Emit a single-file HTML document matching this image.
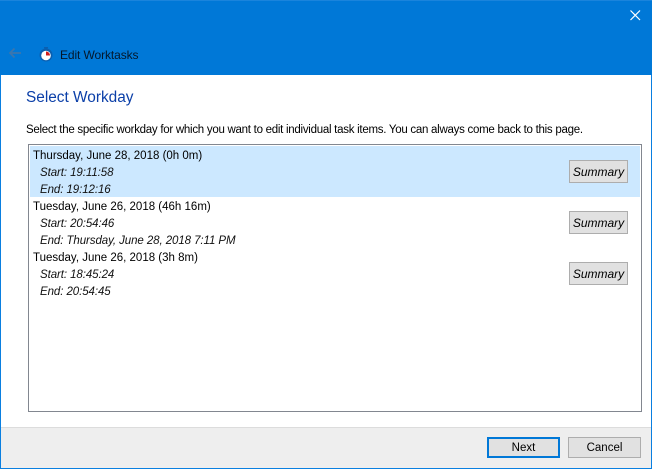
<!DOCTYPE html>
<html><head><meta charset="utf-8"><style>
html,body{margin:0;padding:0;width:652px;height:469px;overflow:hidden;background:#fff}
body{position:relative;font-family:"Liberation Sans",sans-serif;font-size:11.5px;color:#000}
div{position:absolute;box-sizing:border-box}
.t{white-space:nowrap;line-height:16px;height:16px}
.i{font-style:italic;color:#111;letter-spacing:-.08px}
.s{left:569px;width:59px;height:23px;background:#e1e1e1;border:1px solid #adadad;font-size:12px;font-style:italic;text-align:center;line-height:22px;white-space:nowrap}
.b{top:437px;width:73px;height:21px;background:#e1e1e1;border:1px solid #adadad;text-align:center;line-height:21px}
</style></head><body>
<div style="left:0;top:0;width:652px;height:469px;border:1px solid #0a7fe0;border-top:1px solid #1a84dc"></div>
<div style="left:0;top:0;width:652px;height:75px;background:#0078d7;border-top:1px solid #1a84dc"></div>
<svg style="position:absolute;left:0;top:0" width="652" height="75">
<path d="M630.5 10.5l9.5 9.5M640 10.5l-9.5 9.5" stroke="#fff" stroke-width="1.2" fill="none"/>
<path d="M21 53H10M14.5 48.5L10 53l4.500 4.500" stroke="#3b76ad" stroke-width="1.700" fill="none"/>
<circle cx="46" cy="55" r="6.500" fill="#0a5fb0"/>
<circle cx="46" cy="55.500" r="4.800" fill="#fff"/>
<path d="M46 55.500V51.500A4 4 0 0 1 50 55.500Z" fill="#d01c1c"/>
<rect x="44" y="47" width="4" height="1.500" fill="#0a5fb0"/>
</svg>
<div class="t" style="left:60px;top:47px;font-size:12px;color:#04182c;letter-spacing:-.1px">Edit Worktasks</div>
<div style="left:26px;top:88px;font-size:15.400px;line-height:20px;color:#0b3fa8;white-space:nowrap">Select Workday</div>
<div class="t" style="left:26px;top:122px;letter-spacing:-.27px">Select the specific workday for which you want to edit individual task items. You can always come back to this page.</div>
<div style="left:28px;top:144px;width:614px;height:268px;border:1.500px solid #828790"></div>
<div style="left:30px;top:146px;width:610px;height:51px;background:#cce8ff"></div>
<div class="t" style="left:33px;top:148px">Thursday, June 28, 2018 (0h 0m)</div>
<div class="t i" style="left:40px;top:165px">Start: 19:11:58</div>
<div class="t i" style="left:40px;top:182px">End: 19:12:16</div>
<div class="t" style="left:33px;top:199px">Tuesday, June 26, 2018 (46h 16m)</div>
<div class="t i" style="left:40px;top:216px">Start: 20:54:46</div>
<div class="t i" style="left:40px;top:233px">End: Thursday, June 28, 2018 7:11 PM</div>
<div class="t" style="left:33px;top:250px">Tuesday, June 26, 2018 (3h 8m)</div>
<div class="t i" style="left:40px;top:267px">Start: 18:45:24</div>
<div class="t i" style="left:40px;top:284px">End: 20:54:45</div>
<div class="s" style="top:160px">Summary</div>
<div class="s" style="top:211px">Summary</div>
<div class="s" style="top:262px">Summary</div>
<div style="left:1px;top:427px;width:650px;height:41px;background:#eee;border-top:1px solid #dcdcdc"></div>
<div class="b" style="left:487px;border:2px solid #0078d7;line-height:19px">Next</div>
<div class="b" style="left:568px">Cancel</div>
</body></html>
